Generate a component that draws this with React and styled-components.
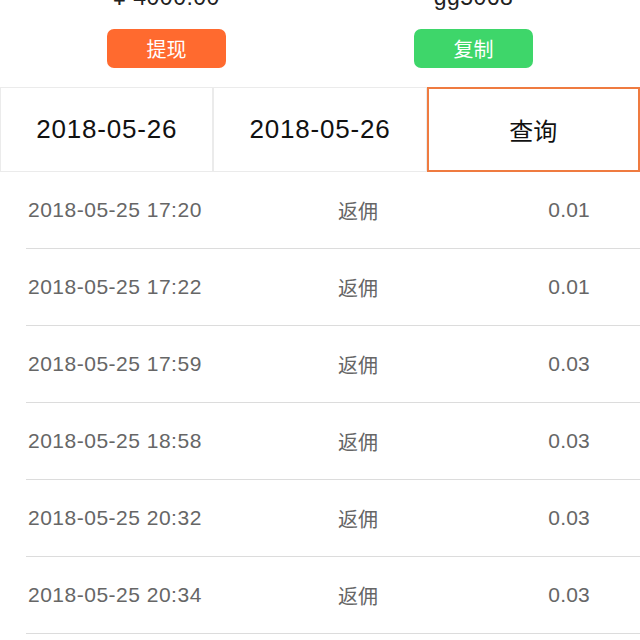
import React from "react";
import styled, { createGlobalStyle } from "styled-components";

const Global = createGlobalStyle`
  html, body { margin: 0; padding: 0; background: #fff; }
  body { font-family: "Liberation Sans", "Noto Sans CJK SC", sans-serif; overflow: hidden; }
`;

const Page = styled.div`
  width: 640px;
  height: 640px;
  overflow: hidden;
  background: #fff;
`;

const Summary = styled.div`
  display: flex;
  padding: 0 13px;
  margin-top: -18px;
  height: 105px;
`;

const SummaryCol = styled.div`
  flex: 1;
  display: flex;
  flex-direction: column;
  align-items: center;
`;

const Value = styled.div`
  font-size: 23px;
  line-height: 30px;
  color: #222;
  letter-spacing: 0.5px;
`;

const ActionButton = styled.button`
  margin-top: 17px;
  width: 119px;
  height: 39px;
  border: none;
  border-radius: 7px;
  background: ${(p) => p.$bg};
  color: #fff;
  font-family: "Noto Sans CJK SC", sans-serif;
  font-size: 20px;
  padding: 0;
`;

const Filter = styled.div`
  display: grid;
  grid-template-columns: repeat(3, 1fr);
  height: 85px;
`;

const FilterCell = styled.div`
  box-sizing: border-box;
  border: 1px solid #ebebeb;
  display: flex;
  align-items: center;
  justify-content: center;
  font-size: 26px;
  letter-spacing: 0.8px;
  color: #111;
  font-family: "Liberation Sans", sans-serif;
`;

const QueryCell = styled(FilterCell)`
  border: 2px solid #ef7b40;
  font-size: 24px;
  letter-spacing: 0;
  font-family: "Noto Sans CJK SC", sans-serif;
`;

const List = styled.div`
  padding-left: 26px;
`;

const Row = styled.div`
  display: grid;
  grid-template-columns: 272px 120px 1fr;
  align-items: center;
  height: 76px;
  border-bottom: 1px solid #dcdcdc;
  color: #666;
`;

const DateText = styled.div`
  font-size: 21px;
  letter-spacing: 0.5px;
  padding-left: 2px;
`;

const TypeText = styled.div`
  text-align: center;
  font-family: "Noto Sans CJK SC", sans-serif;
  font-size: 20px;
`;

const Amount = styled.div`
  text-align: right;
  padding-right: 50px;
  font-size: 21px;
  letter-spacing: 0.2px;
`;

const records = [
  ["2018-05-25 17:20", "0.01"],
  ["2018-05-25 17:22", "0.01"],
  ["2018-05-25 17:59", "0.03"],
  ["2018-05-25 18:58", "0.03"],
  ["2018-05-25 20:32", "0.03"],
  ["2018-05-25 20:34", "0.03"],
];

export default function App() {
  return (
    <Page>
      <Global />
      <Summary>
        <SummaryCol>
          <Value>¥ 4000.00</Value>
          <ActionButton $bg="#ff6a2f">提现</ActionButton>
        </SummaryCol>
        <SummaryCol>
          <Value>gg5068</Value>
          <ActionButton $bg="#3ed66a">复制</ActionButton>
        </SummaryCol>
      </Summary>
      <Filter>
        <FilterCell>2018-05-26</FilterCell>
        <FilterCell>2018-05-26</FilterCell>
        <QueryCell>查询</QueryCell>
      </Filter>
      <List>
        {records.map(([d, a], i) => (
          <Row key={i}>
            <DateText>{d}</DateText>
            <TypeText>返佣</TypeText>
            <Amount>{a}</Amount>
          </Row>
        ))}
      </List>
    </Page>
  );
}
